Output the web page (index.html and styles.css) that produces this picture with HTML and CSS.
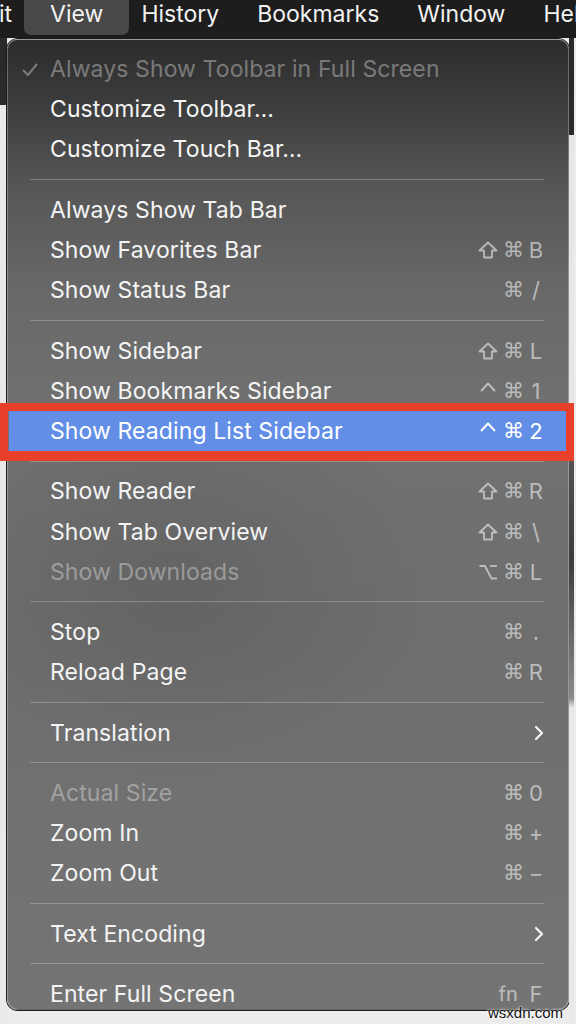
FILE: index.html
```html
<!DOCTYPE html>
<html>
<head>
    <title>Safari - View Menu</title>
    <link rel="stylesheet" href="styles.css">
</head>
<body>
    <div class="menubar">
        <span class="bar-item first">it</span>
        <span class="bar-item active">View</span>
        <span class="bar-item">History</span>
        <span class="bar-item">Bookmarks</span>
        <span class="bar-item">Window</span>
        <span class="bar-item">Help</span>
    </div>

    <div class="screen">
        <div class="side side-left"></div>

        <div class="menu">
            <div class="row disabled">
                <span class="check">
                    <svg width="16" height="14" viewBox="0 0 16 14"><polyline points="1.5,7.5 6,12 14.5,1.5" fill="none" stroke="currentColor" stroke-width="2" stroke-linecap="round" stroke-linejoin="round"/></svg>
                </span>
                <span class="label">Always Show Toolbar in Full Screen</span>
            </div>
            <div class="row"><span class="check"></span><span class="label">Customize Toolbar…</span></div>
            <div class="row"><span class="check"></span><span class="label">Customize Touch Bar…</span></div>
            <div class="sep"></div>

            <div class="row"><span class="check"></span><span class="label">Always Show Tab Bar</span></div>
            <div class="row"><span class="check"></span><span class="label">Show Favorites Bar</span>
                <span class="keys">
                    <svg class="mod" width="20" height="18" viewBox="0 0 20 18"><polygon points="10,1.5 18.5,9.5 14,9.5 14,16.5 6,16.5 6,9.5 1.5,9.5" fill="none" stroke="currentColor" stroke-width="1.8" stroke-linejoin="round"/></svg>
                    <span class="cmd">⌘</span><span class="key">B</span></span></div>
            <div class="row"><span class="check"></span><span class="label">Show Status Bar</span>
                <span class="keys"><span class="cmd">⌘</span><span class="key">/</span></span></div>
            <div class="sep"></div>

            <div class="row"><span class="check"></span><span class="label">Show Sidebar</span>
                <span class="keys">
                    <svg class="mod" width="20" height="18" viewBox="0 0 20 18"><polygon points="10,1.5 18.5,9.5 14,9.5 14,16.5 6,16.5 6,9.5 1.5,9.5" fill="none" stroke="currentColor" stroke-width="1.8" stroke-linejoin="round"/></svg>
                    <span class="cmd">⌘</span><span class="key">L</span></span></div>
            <div class="row"><span class="check"></span><span class="label">Show Bookmarks Sidebar</span>
                <span class="keys">
                    <svg class="mod" width="20" height="18" viewBox="0 0 20 18"><polyline points="3.5,8.5 10,1.5 16.5,8.5" fill="none" stroke="currentColor" stroke-width="1.9" stroke-linecap="round" stroke-linejoin="round"/></svg>
                    <span class="cmd">⌘</span><span class="key">1</span></span></div>
            <div class="row selected"><span class="check"></span><span class="label">Show Reading List Sidebar</span>
                <span class="keys">
                    <svg class="mod" width="20" height="18" viewBox="0 0 20 18"><polyline points="3.5,8.5 10,1.5 16.5,8.5" fill="none" stroke="currentColor" stroke-width="1.9" stroke-linecap="round" stroke-linejoin="round"/></svg>
                    <span class="cmd">⌘</span><span class="key">2</span></span></div>
            <div class="sep"></div>

            <div class="row"><span class="check"></span><span class="label">Show Reader</span>
                <span class="keys">
                    <svg class="mod" width="20" height="18" viewBox="0 0 20 18"><polygon points="10,1.5 18.5,9.5 14,9.5 14,16.5 6,16.5 6,9.5 1.5,9.5" fill="none" stroke="currentColor" stroke-width="1.8" stroke-linejoin="round"/></svg>
                    <span class="cmd">⌘</span><span class="key">R</span></span></div>
            <div class="row"><span class="check"></span><span class="label">Show Tab Overview</span>
                <span class="keys">
                    <svg class="mod" width="20" height="18" viewBox="0 0 20 18"><polygon points="10,1.5 18.5,9.5 14,9.5 14,16.5 6,16.5 6,9.5 1.5,9.5" fill="none" stroke="currentColor" stroke-width="1.8" stroke-linejoin="round"/></svg>
                    <span class="cmd">⌘</span><span class="key">\</span></span></div>
            <div class="row disabled"><span class="check"></span><span class="label">Show Downloads</span>
                <span class="keys">
                    <svg class="mod" width="20" height="18" viewBox="0 0 20 18"><polyline points="1.5,3 7,3 13.5,15.5 19,15.5" fill="none" stroke="currentColor" stroke-width="1.8" stroke-linejoin="round"/><line x1="12" y1="3" x2="19" y2="3" stroke="currentColor" stroke-width="1.8"/></svg>
                    <span class="cmd">⌘</span><span class="key">L</span></span></div>
            <div class="sep"></div>

            <div class="row"><span class="check"></span><span class="label">Stop</span>
                <span class="keys"><span class="cmd">⌘</span><span class="key">.</span></span></div>
            <div class="row"><span class="check"></span><span class="label">Reload Page</span>
                <span class="keys"><span class="cmd">⌘</span><span class="key">R</span></span></div>
            <div class="sep"></div>

            <div class="row"><span class="check"></span><span class="label">Translation</span>
                <span class="arrow">
                    <svg width="10" height="16" viewBox="0 0 10 16"><polyline points="2,2 8,8 2,14" fill="none" stroke="currentColor" stroke-width="2.2" stroke-linecap="round" stroke-linejoin="round"/></svg>
                </span></div>
            <div class="sep"></div>

            <div class="row disabled"><span class="check"></span><span class="label">Actual Size</span>
                <span class="keys"><span class="cmd">⌘</span><span class="key">0</span></span></div>
            <div class="row"><span class="check"></span><span class="label">Zoom In</span>
                <span class="keys"><span class="cmd">⌘</span><span class="key">+</span></span></div>
            <div class="row"><span class="check"></span><span class="label">Zoom Out</span>
                <span class="keys"><span class="cmd">⌘</span><span class="key">−</span></span></div>
            <div class="sep"></div>

            <div class="row"><span class="check"></span><span class="label">Text Encoding</span>
                <span class="arrow">
                    <svg width="10" height="16" viewBox="0 0 10 16"><polyline points="2,2 8,8 2,14" fill="none" stroke="currentColor" stroke-width="2.2" stroke-linecap="round" stroke-linejoin="round"/></svg>
                </span></div>
            <div class="sep"></div>

            <div class="row"><span class="check"></span><span class="label">Enter Full Screen</span>
                <span class="keys"><span class="fn">fn</span><span class="key">F</span></span></div>
        </div>

        <div class="side side-right"></div>
    </div>

    <div class="watermark">wsxdn.com</div>
</body>
</html>
```

FILE: styles.css
```css
body {
    margin: 0;
    width: 576px;
    height: 1024px;
    overflow: hidden;
    position: relative;
    background-color: #ececec;
    font-family: Inter, "Noto Sans", "DejaVu Sans", sans-serif;
    color: #f4f4f4;
}
.menubar {
    display: flex;
    align-items: flex-start;
    height: 38px;
    background-color: #1d1d1d;
    white-space: nowrap;
    overflow: hidden;
}
.bar-item {
    height: 35px;
    line-height: 29px;
    padding: 0 19px;
    font-size: 23px;
    color: #f2f2f2;
}
.bar-item.first {
    padding-left: 0;
    margin-left: -1px;
}
.bar-item.active {
    padding: 0 26px;
    margin: 0 -7px;
    background-color: #484848;
    border-radius: 0 0 7px 7px;
}
.screen {
    display: flex;
    height: 986px;
}
.side {
    flex: none;
}
.side-left {
    width: 7px;
    background: linear-gradient(#2a2a2a 0, #2a2a2a 67px, #e9e9e9 67px);
}
.side-right {
    width: 5px;
    background: linear-gradient(#2a2a2a 0, #2a2a2a 97px, #e6e6e6 97px, #e6e6e6 380px, #5a5a5a 390px, #3c3c3c 520px, #8a8a8a 660px, #e8e8e8 670px);
}
.menu {
    flex: none;
    width: 562px;
    height: 971px;
    margin-top: 1px;
    padding-top: 9px;
    box-sizing: border-box;
    border: 1px solid rgba(255, 255, 255, 0.28);
    border-radius: 11px;
    box-shadow: 0 0 0 1px #1a1a1a;
    background:
        radial-gradient(ellipse 260px 200px at 30% 56%, rgba(0, 0, 0, 0.1), transparent),
        linear-gradient(#2c2c2c 0, #3b3b3b 60px, #575757 150px, #686868 250px, #717171 380px, #6e6e6e 600px, #747474 970px);
}
.row {
    position: relative;
    display: flex;
    align-items: center;
    height: 40.2px;
    padding: 0 23px 0 14px;
    font-size: 23px;
    letter-spacing: 0.1px;
    white-space: nowrap;
}
.check {
    flex: none;
    width: 28px;
    display: flex;
    align-items: center;
    padding-top: 2px;
}
.label {
    flex: 1;
}
.row.disabled .label,
.row.disabled .check {
    color: rgba(255, 255, 255, 0.36);
}
.keys {
    display: flex;
    align-items: center;
    color: rgba(255, 255, 255, 0.55);
    font-size: 22px;
}
.mod {
    display: block;
    margin-right: 5px;
}
.cmd {
    font-family: "DejaVu Sans", sans-serif;
    font-size: 21px;
    margin-right: 3px;
}
.fn {
    font-size: 20px;
    margin-right: 9px;
}
.key {
    width: 18px;
    text-align: center;
}
.arrow {
    display: flex;
    align-items: center;
    margin-right: 1px;
    color: #f4f4f4;
}
.row.selected {
    margin: 0 1px;
    padding: 0 22px 0 13px;
    background-color: #628ee6;
    color: #ffffff;
}
.row.selected .keys {
    color: #ffffff;
}
.row.selected::after {
    content: "";
    position: absolute;
    left: -9px;
    right: -7px;
    top: -8px;
    bottom: -10px;
    border: 8px solid #e8402b;
    border-bottom-width: 10px;
}
.sep {
    height: 1px;
    margin: 9.6px 24px 9.6px 22px;
    background-color: rgba(255, 255, 255, 0.24);
}
.watermark {
    position: absolute;
    right: 13px;
    bottom: 3px;
    font-family: "Liberation Sans", sans-serif;
    font-size: 15px;
    color: #111111;
    text-shadow: 0 0 3px #ffffff, 0 0 2px #ffffff;
}
```
